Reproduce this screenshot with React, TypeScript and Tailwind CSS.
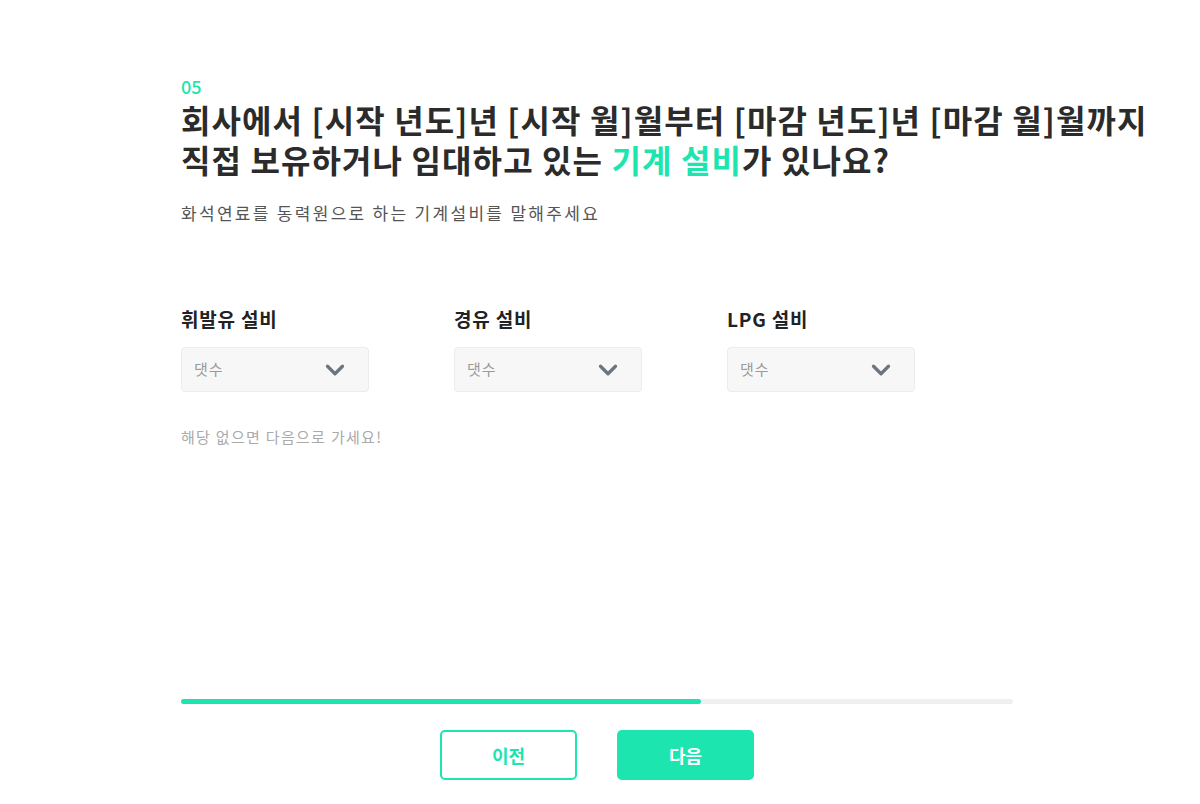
import { ChevronDown } from "lucide-react";

// ─── Constants ────────────────────────────────────────────────────────────────

const FIELDS = ["휘발유 설비", "경유 설비", "LPG 설비"];

const FONT = {
  fontFamily: '"Noto Sans CJK KR", "Noto Sans", sans-serif',
};

// ─── Select box ───────────────────────────────────────────────────────────────

function CountSelect({ label }: { label: string }) {
  return (
    <div className="flex flex-col">
      <span className="text-[19px] leading-[26px] font-bold tracking-[0.8px] text-[#222]">
        {label}
      </span>
      <div className="mt-[15px] flex h-[45px] w-[188px] items-center justify-between rounded-[4px] border border-[#ececec] bg-[#f7f7f7] pl-[12px] pr-[18px]">
        <span className="text-[15px] tracking-[1px] text-[#9a9a9a]">댓수</span>
        <ChevronDown size={30} strokeWidth={2.6} className="text-[#6d7481]" />
      </div>
    </div>
  );
}

// ─── App ──────────────────────────────────────────────────────────────────────

export default function App() {
  const progress = 62.5;

  return (
    <div className="h-[804px] w-[1200px] bg-white" style={FONT}>
      <div className="ml-[181px] flex w-[832px] flex-col pt-[75px]">
        <span className="text-[18px] leading-[22px] font-medium text-[#1de5b0]">
          05
        </span>
        <h1 className="mt-[2px] whitespace-nowrap text-[32px] leading-[40px] font-bold tracking-[1.1px] text-[#2b2b2b]">
          <span className="block">
            회사에서 [시작 년도]년 [시작 월]월부터 [마감 년도]년 [마감 월]월까지
          </span>
          <span className="block">
            직접 보유하거나 임대하고 있는{" "}
            <span className="text-[#1de5b0]">기계 설비</span>가 있나요?
          </span>
        </h1>
        <p className="mt-[22px] text-[17px] leading-[24px] tracking-[2.3px] text-[#555]">
          화석연료를 동력원으로 하는 기계설비를 말해주세요
        </p>

        <div className="mt-[81px] flex gap-[85px]">
          {FIELDS.map((f) => (
            <CountSelect key={f} label={f} />
          ))}
        </div>

        <p className="mt-[35px] text-[15px] leading-[20px] tracking-[1.3px] text-[#aaa]">
          해당 없으면 다음으로 가세요!
        </p>

        <div className="mt-[252px] h-[5px] w-full rounded-full bg-[#efefef]">
          <div
            className="h-full rounded-full bg-[#1de5b0]"
            style={{ width: `${progress}%` }}
          />
        </div>

        <div className="mt-[26px] flex justify-center gap-[40px]">
          <button className="h-[50px] w-[137px] rounded-[5px] border-2 border-[#1de5b0] bg-white text-[18px] font-bold text-[#1de5b0]">
            이전
          </button>
          <button className="h-[50px] w-[137px] rounded-[5px] bg-[#1de5b0] text-[18px] font-bold text-white">
            다음
          </button>
        </div>
      </div>
    </div>
  );
}
